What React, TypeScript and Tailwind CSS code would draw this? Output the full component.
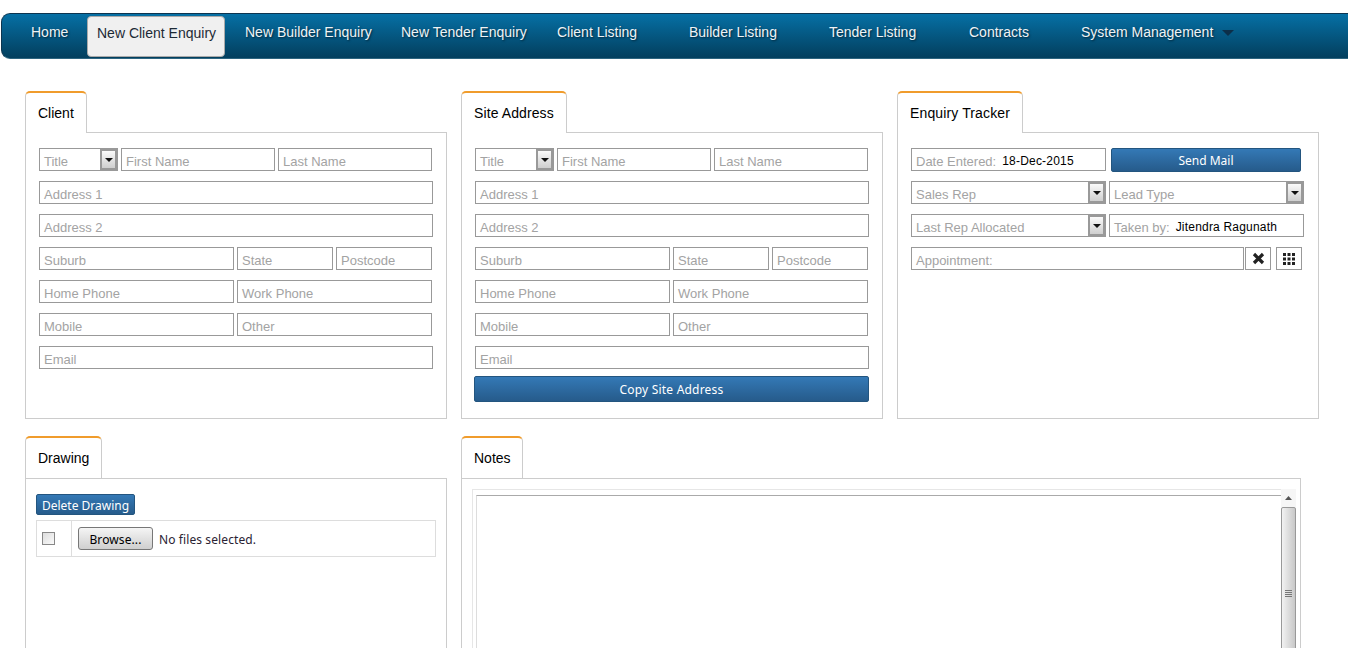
import type { ReactNode } from 'react';

const navItems = [
  { label: 'Home', box: 'w-[66px]' },
  { label: 'New Client Enquiry', box: 'w-[138px] mr-[10px]', active: true },
  { label: 'New Builder Enquiry', box: 'w-[156px]' },
  { label: 'New Tender Enquiry', box: 'w-[156px]' },
  { label: 'Client Listing', box: 'w-[132px]' },
  { label: 'Builder Listing', box: 'w-[140px]' },
  { label: 'Tender Listing', box: 'w-[140px]' },
  { label: 'Contracts', box: 'w-[112px]' },
  { label: 'System Management', box: 'w-auto' },
];

function Field ({ label, value, className }: { label: string; value?: string; className: string }) {
  return (
    <div className={`flex h-[23px] shrink-0 items-center border border-[#999] bg-white pl-1 pt-[4px] text-[13px] text-[#a3a3a3] ${className}`}>
      <span>{label}</span>
      {value && <span className="ml-[6px] -mt-[2px] text-[12px] tracking-[0.2px] text-black">{value}</span>}
    </div>
  );
}

function SelectField ({ label, className }: { label: string; className: string }) {
  return (
    <div className={`flex h-[23px] shrink-0 items-center justify-between border border-[#999] bg-white pl-1 text-[13px] text-[#a3a3a3] ${className}`}>
      <span className="pt-[4px]">{label}</span>
      <span className="flex h-[21px] w-[17px] items-center justify-center border-2 border-[#999] bg-gradient-to-b from-[#fafafa] to-[#cfcfcf]">
        <svg width="8" height="4" viewBox="0 0 8 4">
          <path d="M0 0 H8 L4 4 Z" fill="#111" />
        </svg>
      </span>
    </div>
  );
}

function BlueButton ({ children, className }: { children: ReactNode; className: string }) {
  return (
    <div className={`flex shrink-0 items-center justify-center rounded-[2px] border border-[#23557f] bg-gradient-to-b from-[#3479b6] to-[#265b8b] font-['Noto_Sans',sans-serif] text-[12px] text-white ${className}`}>
      {children}
    </div>
  );
}

function Tab ({ title, className }: { title: string; className: string }) {
  return (
    <div className={`relative z-10 h-[42px] rounded-t-[5px] border-x border-t-2 border-x-[#ccc] border-t-[#f09c2c] bg-white pl-3 pt-[10px] text-[14px] leading-5 text-black ${className}`}>
      {title}
    </div>
  );
}

function AddressForm () {
  return (
    <div className="flex flex-col gap-[10px]">
      <div className="flex gap-[3px]">
        <SelectField label="Title" className="w-[79px]" />
        <Field label="First Name" className="w-[154px]" />
        <Field label="Last Name" className="w-[154px]" />
      </div>
      <Field label="Address 1" className="w-[394px]" />
      <Field label="Address 2" className="w-[394px]" />
      <div className="flex gap-[3px]">
        <Field label="Suburb" className="w-[195px]" />
        <Field label="State" className="w-[96px]" />
        <Field label="Postcode" className="w-[96px]" />
      </div>
      <div className="flex gap-[3px]">
        <Field label="Home Phone" className="w-[195px]" />
        <Field label="Work Phone" className="w-[195px]" />
      </div>
      <div className="flex gap-[3px]">
        <Field label="Mobile" className="w-[195px]" />
        <Field label="Other" className="w-[195px]" />
      </div>
      <Field label="Email" className="w-[394px]" />
    </div>
  );
}

export default function App () {
  return (
    <div className="h-[648px] overflow-hidden bg-white font-['Liberation_Sans',Arial,sans-serif]">
      {/* top nav */}
      <div className="pl-px pt-[13px]">
        <div className="flex h-[46px] items-start rounded-l-[9px] border border-r-0 border-[#0d3550] border-b-[#2d6580] bg-gradient-to-b from-[#0670a5] to-[#033f5e] pl-[19px] pt-[2px]">
          {navItems.map(item => (
            <div
              key={item.label}
              className={`h-[41px] shrink-0 whitespace-nowrap pt-[6px] text-[14px] leading-5 ${item.box} ${
                item.active
                  ? 'rounded-[4px] border border-[#aaa] bg-[#f0f0f0] pl-[9px] pt-[5px] text-[#1c2a36]'
                  : 'pl-[10px] pr-[9px] text-[#eef3f6] [text-shadow:1px_1px_2px_#00283d]'
              }`}
            >
              {item.label}
            </div>
          ))}
          <svg className="mt-[14px]" width="12" height="6" viewBox="0 0 12 6">
            <path d="M0 0 H12 L6 6 Z" fill="#0c2f49" />
          </svg>
        </div>
      </div>

      <div className="pl-[25px] pt-8">
        {/* first row */}
        <div className="flex gap-[14px]">
          <div className="w-[422px]">
            <Tab title="Client" className="-mb-px w-[62px]" />
            <div className="h-[287px] border border-[#ccc] pl-[13px] pt-[15px]">
              <AddressForm />
            </div>
          </div>

          <div className="w-[422px]">
            <Tab title="Site Address" className="-mb-px w-[106px] tracking-[0.1px]" />
            <div className="h-[287px] border border-[#ccc] pl-[13px] pt-[15px]">
              <AddressForm />
              <BlueButton className="-ml-px mt-[7px] h-[26px] w-[395px] pt-px tracking-[0.2px]">Copy Site Address</BlueButton>
            </div>
          </div>

          <div className="w-[422px]">
            <Tab title="Enquiry Tracker" className="-mb-px w-[126px] tracking-[0.13px]" />
            <div className="flex h-[287px] flex-col gap-[10px] border border-[#ccc] pl-[13px] pt-[15px]">
              <div className="flex items-start">
                <Field label="Date Entered:" value="18-Dec-2015" className="w-[195px]" />
                <BlueButton className="-mb-px ml-[5px] h-[24px] w-[190px] pt-px">Send Mail</BlueButton>
              </div>
              <div className="flex gap-[3px]">
                <SelectField label="Sales Rep" className="w-[195px]" />
                <SelectField label="Lead Type" className="w-[195px]" />
              </div>
              <div className="flex gap-[3px]">
                <SelectField label="Last Rep Allocated" className="w-[195px]" />
                <Field label="Taken by:" value="Jitendra Ragunath" className="w-[195px]" />
              </div>
              <div className="flex items-start">
                <Field label="Appointment:" className="w-[333px]" />
                <div className="ml-px flex h-[23px] w-[26px] items-center justify-center border border-[#999]">
                  <svg width="13" height="13" viewBox="0 0 13 13">
                    <path d="M2 2 L11 11 M11 2 L2 11" stroke="#222" strokeWidth="3.200" />
                  </svg>
                </div>
                <div className="ml-[5px] flex h-[23px] w-[26px] items-center justify-center border border-[#999]">
                  <svg width="12" height="12" viewBox="0 0 12 12" fill="#222">
                    <path d="M0 0h3v3H0zM4.500 0h3v3h-3zM9 0h3v3H9zM0 4.500h3v3H0zM4.500 4.500h3v3h-3zM9 4.500h3v3H9zM0 9h3v3H0zM4.500 9h3v3h-3zM9 9h3v3H9z" />
                  </svg>
                </div>
              </div>
            </div>
          </div>
        </div>

        {/* second row */}
        <div className="mt-[17px] flex gap-[14px]">
          <div className="w-[422px]">
            <Tab title="Drawing" className="w-[77px]" />
            <div className="h-[300px] border border-[#ccc] pl-[10px] pt-[15px]">
              <BlueButton className="h-[21px] w-[99px] pt-[3px]">Delete Drawing</BlueButton>
              <div className="mt-[5px] flex h-[37px] w-[400px] border border-[#ddd]">
                <div className="flex w-[35px] items-center border-r border-[#ddd] pl-[5px]">
                  <span className="h-[13px] w-[13px] border border-[#888] bg-gradient-to-br from-[#ddd] to-[#fafafa]" />
                </div>
                <div className="flex items-center pl-[6px] font-['Noto_Sans',sans-serif] text-[12px] tracking-[0.1px] text-[#2a2233]">
                  <span className="flex h-[23px] w-[75px] items-center justify-center rounded-[3px] border border-[#777] bg-gradient-to-b from-[#f5f5f5] to-[#cfcfcf] pt-[3px] text-black">
                    Browse...
                  </span>
                  <span className="ml-[6px] pt-[3px]">No files selected.</span>
                </div>
              </div>
            </div>
          </div>

          <div className="w-[840px]">
            <Tab title="Notes" className="w-[62px]" />
            <div className="h-[300px] border border-[#ccc] pl-[10px] pt-[10px]">
              <div className="flex h-[280px] w-[824px] border-l border-t border-[#e6e6e6] pl-[3px] pt-[5px]">
                <div className="flex-1 border-l border-t border-l-[#ddd] border-t-[#aaa]" />
                <div className="-mt-[6px] flex w-[15px] shrink-0 flex-col items-center bg-[#f6f6f6]">
                  <svg className="mt-[7px]" width="7" height="4" viewBox="0 0 7 4">
                    <path d="M3.500 0 L7 4 H0 Z" fill="#555" />
                  </svg>
                  <div className="mt-[7px] flex h-[172px] w-[15px] shrink-0 flex-col items-center justify-center gap-px rounded-t-[2px] border border-[#999] bg-gradient-to-r from-[#f2f2f2] to-[#c8c8c8]">
                    <span className="h-px w-[7px] bg-[#777]" />
                    <span className="h-px w-[7px] bg-[#777]" />
                    <span className="h-px w-[7px] bg-[#777]" />
                    <span className="h-px w-[7px] bg-[#777]" />
                  </div>
                </div>
              </div>
            </div>
          </div>
        </div>
      </div>
    </div>
  );
}
